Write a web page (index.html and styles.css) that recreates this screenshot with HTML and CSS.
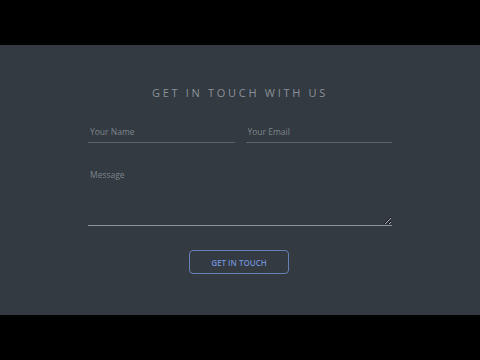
FILE: index.html
```html
<!DOCTYPE html>
<html>
<head>
<meta charset="utf-8">
<link rel="stylesheet" href="styles.css">
</head>
<body>
<div class="bar"></div>
<section class="contact">
  <h1 class="title">GET IN TOUCH WITH US</h1>
  <form class="form">
    <div class="row">
      <input class="field" type="text" placeholder="Your Name">
      <input class="field" type="email" placeholder="Your Email">
    </div>
    <textarea class="message" placeholder="Message"></textarea>
    <div class="actions">
      <button class="btn" type="button">GET IN TOUCH</button>
    </div>
  </form>
</section>
<div class="bar bottom"></div>
</body>
</html>
```

FILE: styles.css
```css
html, body {
  margin: 0;
  padding: 0;
  background: #000;
}
body {
  width: 480px;
  height: 360px;
  overflow: hidden;
  font-family: "Open Sans", "Liberation Sans", sans-serif;
}
.bar {
  height: 45px;
  background: #000;
}
.contact {
  height: 270px;
  box-sizing: border-box;
  background: #343a42;
  padding-top: 40px;
  display: flex;
  flex-direction: column;
  align-items: center;
}
.title {
  margin: 0;
  font-size: 11px;
  line-height: 16px;
  font-weight: 400;
  letter-spacing: 2.7px;
  color: #8a9098;
}
.form {
  width: 304px;
  margin-top: 22px;
  display: flex;
  flex-direction: column;
}
.row {
  display: flex;
  gap: 11px;
}
.field {
  flex: 1;
  min-width: 0;
  height: 20px;
  box-sizing: border-box;
  background: transparent;
  border: 0;
  border-bottom: 1.5px solid #5b6169;
  padding: 0 2px 2px;
  font-family: inherit;
  font-size: 8.5px;
  color: #8a9098;
  outline: none;
}
.field::placeholder,
.message::placeholder {
  color: #7d838b;
}
.message {
  margin-top: 22px;
  height: 61px;
  box-sizing: border-box;
  background: transparent;
  border: 0;
  border-bottom: 1px solid #8d939b;
  padding: 4px 2px;
  font-family: inherit;
  font-size: 8.5px;
  color: #8a9098;
  outline: none;
  resize: vertical;
}
.actions {
  display: flex;
  justify-content: center;
  margin-top: 24px;
  margin-left: -2px;
}
.btn {
  width: 100px;
  height: 24px;
  background: transparent;
  border: 1px solid #6580b5;
  border-radius: 4px;
  color: #6f8fd0;
  font-family: inherit;
  font-size: 8px;
  font-weight: 600;
  padding: 0;
}
```
